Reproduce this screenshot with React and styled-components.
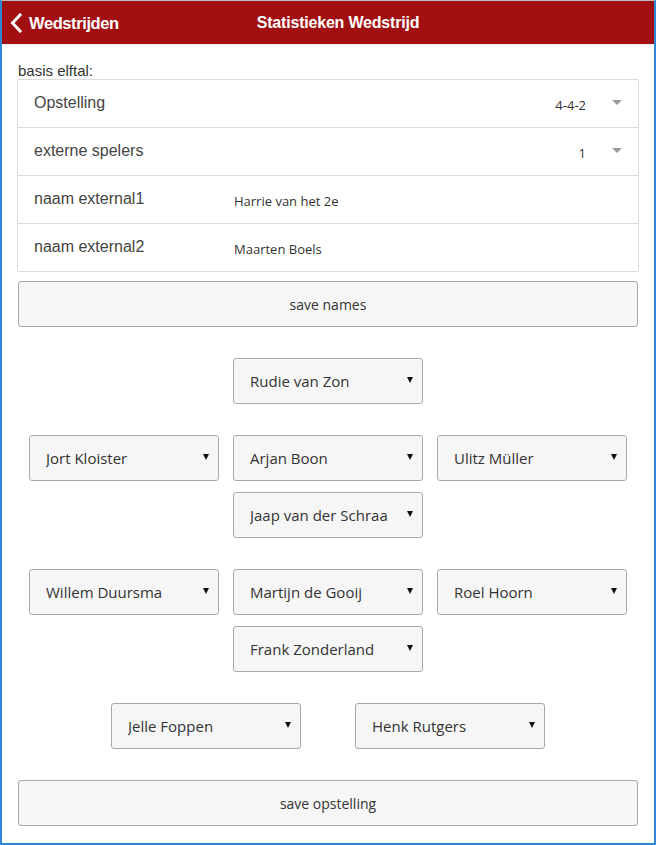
import React from 'react';
import styled, { createGlobalStyle } from 'styled-components';

const GlobalStyle = createGlobalStyle`
  html, body {
    margin: 0;
    padding: 0;
    background: #fff;
  }
  * {
    box-sizing: border-box;
  }
`;

const formation = [
  ['Rudie van Zon'],
  ['Jort Kloister', 'Arjan Boon', 'Ulitz Müller'],
  ['Jaap van der Schraa'],
  ['Willem Duursma', 'Martijn de Gooij', 'Roel Hoorn'],
  ['Frank Zonderland'],
];

const Chevron = () => (
  <svg width="12" height="20" viewBox="0 0 12 20">
    <path d="M10 2 L2.5 10 L10 18" fill="none" stroke="#fff" strokeWidth="3" strokeLinecap="square" />
  </svg>
);

const PlayerSelect = ({ name }) => (
  <SelectWrap>
    <Select defaultValue={name}>
      <option>{name}</option>
    </Select>
  </SelectWrap>
);

const App = () => {
  return (
    <Frame>
      <GlobalStyle />
      <Header>
        <BackLink>
          <Chevron />
          <span>Wedstrijden</span>
        </BackLink>
        <Title>Statistieken Wedstrijd</Title>
      </Header>

      <Content>
        <SectionLabel>basis elftal:</SectionLabel>
        <List>
          <Row>
            <RowLabel>Opstelling</RowLabel>
            <DropValue>4-4-2</DropValue>
            <Caret />
          </Row>
          <Row>
            <RowLabel>externe spelers</RowLabel>
            <DropValue>1</DropValue>
            <Caret />
          </Row>
          <Row>
            <RowLabel>naam external1</RowLabel>
            <NameValue>Harrie van het 2e</NameValue>
          </Row>
          <Row>
            <RowLabel>naam external2</RowLabel>
            <NameValue>Maarten Boels</NameValue>
          </Row>
        </List>

        <WideButton $top="9px">save names</WideButton>

        <Pitch>
          <Line>
            <PlayerSelect name="Rudie van Zon" />
          </Line>
          {[1, 3].map((i) => (
            <Block key={i}>
              <Line>
                {formation[i].map((n) => (
                  <PlayerSelect key={n} name={n} />
                ))}
              </Line>
              <Line>
                <PlayerSelect name={formation[i + 1][0]} />
              </Line>
            </Block>
          ))}
          <Line $spread>
            <PlayerSelect name="Jelle Foppen" />
            <PlayerSelect name="Henk Rutgers" />
          </Line>
        </Pitch>

        <WideButton>save opstelling</WideButton>
      </Content>
    </Frame>
  );
};

export default App;

const Frame = styled.div`
  width: 656px;
  height: 845px;
  border: 2px solid #2b88d8;
  border-top: 1px solid #b9b9b9;
  background: #fff;
  overflow: hidden;
`;

const Header = styled.header`
  position: relative;
  height: 44px;
  background: #a20f11;
  border-bottom: 1px solid #f2f2f2;
  display: flex;
  align-items: center;
  justify-content: center;
  color: #fff;
  font-family: "Liberation Sans", Arial, sans-serif;
`;

const BackLink = styled.a`
  position: absolute;
  left: 8px;
  top: 0;
  bottom: 0;
  display: flex;
  align-items: center;
  gap: 7px;
  font-size: 16.5px;
  font-weight: 700;
  letter-spacing: -0.4px;
  span {
    padding-top: 2px;
  }
`;

const Title = styled.h1`
  margin: 0 0 0 20px;
  font-size: 16px;
  font-weight: 700;
  letter-spacing: -0.2px;
`;

const Content = styled.main`
  padding: 17px 16px 0 16px;
`;

const SectionLabel = styled.div`
  font-family: "Liberation Sans", Arial, sans-serif;
  font-size: 15px;
  color: #333;
  line-height: 17px;
`;

const List = styled.div`
  margin: 0 -1px;
  border: 1px solid #dcdcdc;
  border-radius: 2px;
`;

const Row = styled.div`
  height: 48px;
  display: flex;
  align-items: center;
  padding: 0 16px 0 16px;
  border-top: 1px solid #dcdcdc;
  &:first-child {
    border-top: none;
    height: 47px;
  }
`;

const RowLabel = styled.div`
  width: 200px;
  font-family: "Liberation Sans", Arial, sans-serif;
  font-size: 16px;
  color: #444;
  margin-top: -2px;
`;

const DropValue = styled.div`
  margin-left: auto;
  font-family: "Open Sans", sans-serif;
  font-size: 13px;
  color: #333;
  margin-top: 2px;
`;

const Caret = styled.span`
  margin-left: 26px;
  width: 0;
  height: 0;
  border-left: 5.5px solid transparent;
  border-right: 5.5px solid transparent;
  border-top: 5px solid #9a9a9a;
  margin-top: -3px;
`;

const NameValue = styled.div`
  font-family: "Open Sans", sans-serif;
  font-size: 13px;
  color: #333;
  margin-top: 2px;
`;

const WideButton = styled.button`
  display: block;
  width: 620px;
  height: 46px;
  margin: ${(p) => p.$top || '0'} 0 0;
  background: #f6f6f6;
  border: 1px solid #a9a9a9;
  border-radius: 3px;
  font-family: "Open Sans", sans-serif;
  font-size: 14px;
  color: #333;
  padding: 0;
`;

const Pitch = styled.section`
  display: flex;
  flex-direction: column;
  gap: 31px;
  padding: 31px 0 31px;
`;

const Block = styled.div`
  display: flex;
  flex-direction: column;
  gap: 11px;
`;

const Line = styled.div`
  display: flex;
  justify-content: center;
  gap: ${(p) => (p.$spread ? '54px' : '14px')};
`;

const SelectWrap = styled.div`
  position: relative;
  width: 190px;
  height: 46px;
  &::after {
    content: '';
    position: absolute;
    right: 10px;
    top: 19px;
    border-left: 3px solid transparent;
    border-right: 3px solid transparent;
    border-top: 6px solid #111;
  }
`;

const Select = styled.select`
  appearance: none;
  -webkit-appearance: none;
  width: 100%;
  height: 100%;
  background: #f6f6f6;
  border: 1px solid #a9a9a9;
  border-radius: 3px;
  padding: 0 24px 0 16px;
  font-family: "Open Sans", sans-serif;
  font-size: 15px;
  color: #333;
  outline: none;
`;
